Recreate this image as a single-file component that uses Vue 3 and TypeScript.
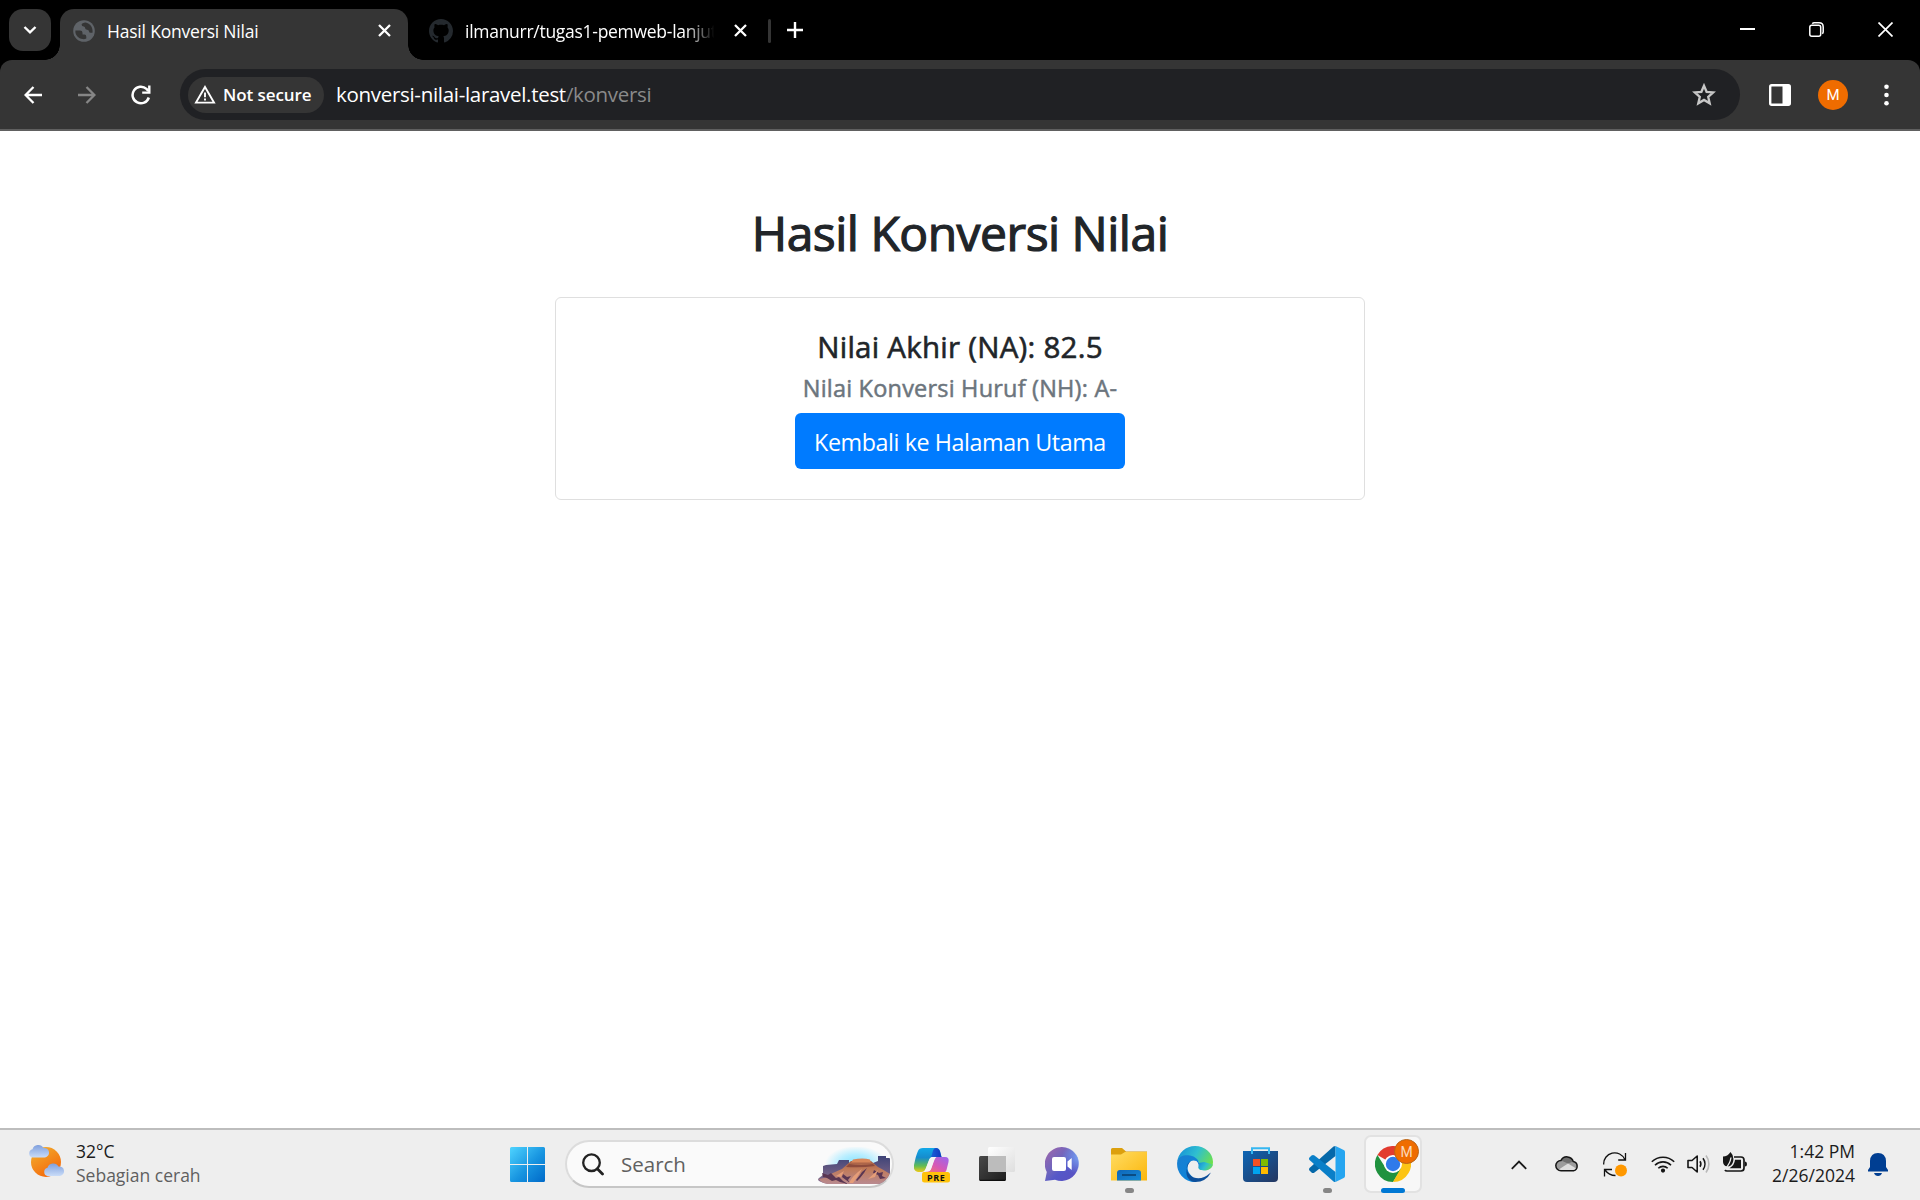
<script setup lang="ts">
import { ref } from 'vue'

const finalScore = ref<number>(82.5)
const letterGrade = ref<string>('A-')
const host = 'konversi-nilai-laravel.test'
const path = '/konversi'
</script>

<template>
  <div class="screen">
    <header class="tabstrip">
      <button class="tab-search" aria-label="Search tabs">
        <svg width="14" height="10" viewBox="0 0 14 10"><path d="M1.5 2 7 7.3 12.5 2" fill="none" stroke="#fff" stroke-width="2.4" /></svg>
      </button>
      <div class="tab active">
        <svg class="favicon globe" width="22" height="22" viewBox="0 0 22 22">
          <circle cx="11" cy="11" r="10.8" fill="#5f6368" />
          <path d="M2.400 10.500H7q2.500 0 2.500 2.200v1.800h2q1.800 0 1.800 2.200v1.800q-1.500.8-3.500.6C5.200 18.500 2 15 2.400 10.500Z" fill="#353535" />
          <path d="M12.500 2.400C10.500 2.600 8.800 3.200 8.600 4.600q0 1.800 2.200 2 1.300.3 1.300 1.500 0 1.700 2 1.700 1.800 0 1.900 1.700.1 1.300 1.500 1.300h2C20.300 7.500 17.200 3.300 12.500 2.400Z" fill="#353535" />
        </svg>
        <span class="tab-title t1">Hasil Konversi Nilai</span>
        <svg class="close" width="13" height="13" viewBox="0 0 13 13"><path d="M1 1l11 11M12 1 1 12" stroke="#fff" stroke-width="2.300" /></svg>
      </div>
      <div class="tab second">
        <svg class="favicon" width="24" height="24" viewBox="0 0 16 16"><path fill="#24292e" d="M8 0C3.580 0 0 3.580 0 8c0 3.540 2.290 6.530 5.470 7.590.4.070.55-.17.55-.38 0-.19-.01-.82-.01-1.490-2.010.37-2.530-.49-2.690-.94-.09-.23-.48-.94-.82-1.130-.28-.15-.68-.52-.01-.53.63-.01 1.080.58 1.230.82.720 1.210 1.870.87 2.330.66.070-.52.280-.87.510-1.070-1.780-.2-3.640-.89-3.640-3.950 0-.87.310-1.590.82-2.150-.08-.2-.36-1.020.08-2.120 0 0 .67-.21 2.200.82.640-.18 1.320-.27 2-.27s1.360.09 2 .27c1.530-1.040 2.200-.82 2.200-.82.440 1.100.160 1.920.08 2.120.510.560.82 1.270.82 2.150 0 3.070-1.870 3.750-3.650 3.950.29.250.54.730.54 1.480 0 1.070-.01 1.930-.01 2.200 0 .210.150.460.550.380A8.010 8.010 0 0 0 16 8c0-4.420-3.580-8-8-8Z" /></svg>
        <span class="tab-title t2">ilmanurr/tugas1-pemweb-lanjut</span>
        <svg class="close" width="13" height="13" viewBox="0 0 13 13"><path d="M1 1l11 11M12 1 1 12" stroke="#fff" stroke-width="2.300" /></svg>
      </div>
      <span class="separator"></span>
      <svg class="plus" width="16" height="16" viewBox="0 0 16 16"><path d="M8 0v16M0 8h16" stroke="#fff" stroke-width="2.400" /></svg>
      <div class="window-controls">
        <svg width="15" height="15" viewBox="0 0 15 15"><path d="M0 7h15" stroke="#fff" stroke-width="2" /></svg>
        <svg width="15" height="15" viewBox="0 0 15 15" fill="none" stroke="#fff" stroke-width="1.500"><rect x=".8" y="3.300" width="10.900" height="10.900" rx="2" /><path d="M3.300 1.700Q4 .8 5.300.8H10Q14.200.8 14.200 5v4.800q0 1.200-.9 2" /></svg>
        <svg width="15" height="15" viewBox="0 0 15 15"><path d="M.5.5l14 14M14.500.5l-14 14" stroke="#fff" stroke-width="1.700" /></svg>
      </div>
    </header>

    <div class="toolbar-back">
      <nav class="toolbar">
        <svg class="back" width="18" height="18" viewBox="0 0 18 18" fill="none" stroke="#fff" stroke-width="2.300"><path d="M18 9H2M9.500 1 1.600 9l7.900 8" /></svg>
        <svg class="forward" width="18" height="18" viewBox="0 0 18 18" fill="none" stroke="#868686" stroke-width="2.300"><path d="M0 9h16M8.500 1l7.900 8-7.900 8" /></svg>
        <svg class="reload" width="20" height="20" viewBox="0 0 20 20"><path d="M17.800 12.500A8.300 8.300 0 1 1 15.500 3.900L17.300 6" fill="none" stroke="#fff" stroke-width="2.500" /><path d="M19.500.5v8.300h-8.300V6.400h5.900V.5Z" fill="#fff" /></svg>
        <div class="omnibox">
          <div class="chip">
            <svg width="22" height="19" viewBox="0 0 22 19"><path d="M11 2 20 17.600H2Z" fill="none" stroke="#fff" stroke-width="1.900" /><path d="M11 7.600v4.600M11 13.600v2" stroke="#fff" stroke-width="1.900" /></svg>
            <span>Not secure</span>
          </div>
          <p class="url"><span class="host">{{ host }}</span><span class="path">{{ path }}</span></p>
          <svg class="star" width="24" height="23" viewBox="0 0 24 23"><path d="M12 2.700l2.600 6.100 6.600.6-5 4.400 1.500 6.500L12 16.900l-5.700 3.400 1.500-6.500-5-4.400 6.600-.6Z" fill="none" stroke="#c7c7c7" stroke-width="2.300" /></svg>
        </div>
        <svg class="panel" width="22" height="22" viewBox="0 0 22 22"><rect x="1.200" y="1.200" width="19.600" height="19.600" rx="1.500" fill="none" stroke="#fff" stroke-width="2.400" /><path d="M13.500 1h7.500v20h-7.500Z" fill="#fff" /></svg>
        <span class="avatar">M</span>
        <svg class="dots" width="5" height="22" viewBox="0 0 5 22" fill="#fff"><circle cx="2.500" cy="2.700" r="2.300" /><circle cx="2.500" cy="11" r="2.300" /><circle cx="2.500" cy="19.300" r="2.300" /></svg>
      </nav>
    </div>

    <main class="page">
      <h1>Hasil Konversi Nilai</h1>
      <section class="card">
        <h5>Nilai Akhir (NA): {{ finalScore }}</h5>
        <h6>Nilai Konversi Huruf (NH): {{ letterGrade }}</h6>
        <a class="btn">Kembali ke Halaman Utama</a>
      </section>
    </main>

    <footer class="taskbar">
      <svg class="weather" width="37" height="35" viewBox="0 0 37 35">
        <defs>
          <linearGradient id="sun" x1="0" y1="0" x2=".6" y2="1"><stop offset="0" stop-color="#f2b430" /><stop offset="1" stop-color="#f4690c" /></linearGradient>
          <linearGradient id="cloud" x1="0" y1="0" x2="0" y2="1"><stop offset="0" stop-color="#7f9fdd" /><stop offset="1" stop-color="#c9dcf8" /></linearGradient>
        </defs>
        <circle cx="18" cy="18" r="15" fill="url(#sun)" />
        <path d="M4.500 13.500a4.200 4.200 0 0 1 0-8.200A6 6 0 0 1 15.500 4a4.800 4.800 0 0 1 1.500 9.500Z" fill="url(#cloud)" />
        <path d="M19.500 32a4.200 4.200 0 0 1 0-8.200A6 6 0 0 1 30.500 22.500a4.800 4.800 0 0 1 1.500 9.500Z" fill="url(#cloud)" />
      </svg>
      <div class="weather-text"><span class="temp">32°C</span><span class="sky">Sebagian cerah</span></div>

      <svg class="start" width="35" height="35" viewBox="0 0 35 35">
        <defs><linearGradient id="win" x1="0" y1="0" x2="35" y2="35" gradientUnits="userSpaceOnUse"><stop offset="0" stop-color="#4fd4ff" /><stop offset=".55" stop-color="#1794e0" /><stop offset="1" stop-color="#0069c8" /></linearGradient></defs>
        <path d="M1.500 0H17v17H0V1.500Q0 0 1.500 0ZM18 0h15.500Q35 0 35 1.500V17H18ZM0 18h17v17H1.500Q0 35 0 33.500ZM18 18h17v15.500q0 1.500-1.500 1.500H18Z" fill="url(#win)" />
      </svg>

      <div class="search">
        <svg class="mag" width="22" height="23" viewBox="0 0 22 23"><circle cx="9.500" cy="9.700" r="8.300" fill="none" stroke="#222" stroke-width="2.300" /><path d="M15.300 15.800 20.500 21" stroke="#222" stroke-width="2.800" stroke-linecap="round" /></svg>
        <span>Search</span>
        <svg class="art" width="73" height="38" viewBox="0 0 73 38">
          <defs>
            <radialGradient id="glow" cx=".5" cy=".5" r=".5"><stop offset="0" stop-color="#7fe2ff" /><stop offset=".55" stop-color="#b9eeff" /><stop offset="1" stop-color="#fafafa" /></radialGradient>
            <linearGradient id="mesa" x1="0" y1="0" x2="0" y2="1"><stop offset="0" stop-color="#a55c42" /><stop offset=".35" stop-color="#c07a58" /><stop offset="1" stop-color="#b98a90" /></linearGradient>
            <linearGradient id="far" x1="0" y1="0" x2="0" y2="1"><stop offset="0" stop-color="#3e4377" /><stop offset="1" stop-color="#8d6f8c" /></linearGradient>
          </defs>
          <ellipse cx="38" cy="17" rx="31" ry="18" fill="url(#glow)" />
          <path d="M5 19 8 18l11-1 2-4h10v3h24l5-2v-5h8v2h4v16q-2 10-11 10H10Q-3 34 1 31l4-3Z" fill="url(#far)" />
          <path d="M6 31q10-6 18-9l9-8h20l7 6q6 3 12 7-4 10-12 10H10q-7-1-9-5Z" fill="url(#mesa)" />
          <path d="M35 12.500q10-2 17 0l1 3H33Z" fill="#d9875a" />
          <path d="M31 17q12 2 24 0l2 2q-14 2-29 1Z" fill="#8e4b3c" />
          <path d="M4 26l6 2 3-2 5 5 3-1 4 4 5 3-8-2-4-2-4 1-5-3-4-1ZM25 27l4 3 4-1-3 4 2 3-4-3-4-3ZM38 33l4-5 2-3 5-4-3 5-4 5-3 3ZM56 23l5 3 4-1-1 4 4 2-6 1-2-4-5-2Z" fill="#5a3652" />
          <path d="M31 36q4-8 13-14l-4 7-5 7ZM50 32l10-9-3 7ZM18 29l8-5-3 6Z" fill="#e59d78" />
        </svg>
      </div>

      <svg class="copilot" width="36" height="35" viewBox="0 0 36 35">
        <defs>
          <linearGradient id="cpa" x1="0" y1="0" x2="0" y2="1"><stop offset="0" stop-color="#12a8e8" /><stop offset=".4" stop-color="#168ccd" /><stop offset=".75" stop-color="#63bd52" /><stop offset="1" stop-color="#f0ca18" /></linearGradient>
          <linearGradient id="cpb" x1="1" y1="0" x2="0" y2="1"><stop offset="0" stop-color="#9867f0" /><stop offset=".5" stop-color="#d658b6" /><stop offset="1" stop-color="#ff7b59" /></linearGradient>
          <linearGradient id="cpc" x1="0" y1="0" x2="1" y2="0"><stop offset="0" stop-color="#1a5fd8" /><stop offset="1" stop-color="#1338be" /></linearGradient>
        </defs>
        <path d="M21 9h10q4.500 0 3.500 5l-2 8q-1 3-4 3H8l5-1.500q3 0 4-3Z" fill="url(#cpb)" />
        <path d="M9 0h13q3 0 4 3l1.500 6H19q-3 0-4 3l-3.500 9q-1 3-4 3H4q-5-1-4-7Q2 7 4 3 5 0 9 0Z" fill="url(#cpa)" />
        <path d="M22 0q3 0 4 3.500L27.500 9H17q1-2 1.600-5Q19.500 0 22 0Z" fill="url(#cpc)" />
        <path d="M18.500 9h4q-1.500 1-2.500 4l-2.500 7q-1 3.500-4 3.500H9q2-.5 3-3l3-8q1-3.500 3.500-3.500Z" fill="#f4f4f4" />
        <rect x="8" y="24" width="28" height="10.500" rx="2.500" fill="#ffc20a" />
        <text x="22.300" y="32.600" text-anchor="middle" class="pre">PRE</text>
      </svg>

      <svg class="taskview" width="36" height="35" viewBox="0 0 36 35">
        <defs>
          <linearGradient id="tva" x1="0" y1="0" x2="1" y2="1"><stop offset="0" stop-color="#494949" /><stop offset="1" stop-color="#1d1d1d" /></linearGradient>
          <linearGradient id="tvb" x1="0" y1="0" x2="1" y2="1"><stop offset="0" stop-color="#fff" /><stop offset="1" stop-color="#dedede" /></linearGradient>
        </defs>
        <rect x="0" y="9" width="27" height="25" rx="1.500" fill="url(#tva)" />
        <rect x="9" y="0" width="27" height="25" rx="1.500" fill="url(#tvb)" />
        <path d="M9 9h18v16H10.500Q9 25 9 23.500Z" fill="#bcbcbc" />
        <path d="M1 33.300h25" stroke="#080808" />
      </svg>

      <svg class="chat" width="34" height="34" viewBox="0 0 34 34">
        <defs>
          <linearGradient id="chat" x1="0" y1="0" x2="1" y2="1"><stop offset="0" stop-color="#a467a9" /><stop offset=".45" stop-color="#6a64bf" /><stop offset=".6" stop-color="#5558c8" /><stop offset="1" stop-color="#5b4fc0" /></linearGradient>
          <radialGradient id="shine" cx="1" cy=".3" r=".5"><stop offset="0" stop-color="#7aa0f0" /><stop offset="1" stop-color="#7aa0f0" stop-opacity="0" /></radialGradient>
        </defs>
        <path d="M17 0A17 17 0 1 1 10 32.700L0 34l1.800-9A17 17 0 0 1 17 0Z" fill="url(#chat)" />
        <circle cx="17" cy="17" r="17" fill="url(#shine)" />
        <rect x="7" y="10" width="14" height="14" rx="2" fill="#fff" /><path d="M22.500 14.500 26.700 11v12l-4.200-3.500Z" fill="#fff" />
      </svg>

      <div class="app folder">
        <svg width="36" height="33" viewBox="0 0 36 33">
          <defs><linearGradient id="fold" x1="0" y1="0" x2="1" y2="1"><stop offset="0" stop-color="#ffdc62" /><stop offset="1" stop-color="#fbb60b" /></linearGradient><linearGradient id="tray" x1="0" y1="0" x2="1" y2="1"><stop offset="0" stop-color="#0f66b8" /><stop offset="1" stop-color="#168bd8" /></linearGradient></defs>
          <path d="M0 1.500Q0 0 1.500 0H11l4 3.500h21V10H0Z" fill="#dca00e" />
          <path d="M0 6.500h10L14 4h22v28.500H0Z" fill="url(#fold)" />
          <path d="M6 32.500V25q0-3 3-3h18q3 0 3 3v7.500Z" fill="url(#tray)" /><path d="M11 27h14" stroke="#0b4477" stroke-width="1.700" />
        </svg>
        <i class="running"></i>
      </div>

      <svg class="edge" width="36" height="36" viewBox="0 0 36 36">
        <defs>
          <linearGradient id="ega" x1="0" y1=".2" x2="1" y2=".6"><stop offset="0" stop-color="#1690d8" /><stop offset=".5" stop-color="#2fbfd0" /><stop offset="1" stop-color="#6de04c" /></linearGradient>
          <linearGradient id="egb" x1="0" y1="0" x2=".7" y2="1"><stop offset="0" stop-color="#1b7fd0" /><stop offset="1" stop-color="#0a85dc" /></linearGradient>
        </defs>
        <path d="M.2 16A18 18 0 0 1 18 0c10 0 18 7 18 16 0 6-5 8.500-9 8.500-5 0-6.500-2-5.500-3.500 1.500-3 .5-7-4-8.500C10 10 1 11 .2 16Z" fill="url(#ega)" />
        <path d="M.2 16C1 10 8 8.500 13 9.500c5 1 9 4 9 8q0 2-.5 3c0-3-1.500-6-5-6-5 0-8 7-4 13 3 4.500 10 8 5.500 8.500A18 18 0 0 1 .2 16Z" fill="url(#egb)" />
        <path d="M14.500 14.800C9 17 8 24 13 29c5 5 14 4 19.500-1.500l1.500-1A18 18 0 0 1 18 36C11 35 8 29 10 22q1-5 4.500-7.200Z" fill="#0d4f9a" />
        <path d="M14.500 16.500c-1.500 3-1 7 3.500 9.500 4.500 2.300 10 2 14 0 1-.4 2.500 0 1.700 1L36 23 23 24q-2-1.400-1.500-3 .6-5-3.500-6.200Z" fill="#eee" />
        <path d="M21.500 20.500q-1 3.500 5.500 4c4 0 8-2 9-6L27 16l-5 1Z" fill="url(#ega)" />
      </svg>

      <svg class="store" width="35" height="35" viewBox="0 0 35 35">
        <defs><linearGradient id="store" x1="0" y1="0" x2="1" y2="1"><stop offset="0" stop-color="#0c65b5" /><stop offset="1" stop-color="#25365f" /></linearGradient></defs>
        <path d="M0 4h35v27q0 4-4 4H4q-4 0-4-4Z" fill="url(#store)" />
        <path d="M9 7V1.200h17V7" fill="none" stroke="#36b7f1" stroke-width="2" />
        <path d="M10 12h7v7h-7Z" fill="#f25022" /><path d="M18 12h7v7h-7Z" fill="#7fba00" /><path d="M10 20h7v7h-7Z" fill="#00a4ef" /><path d="M18 20h7v7h-7Z" fill="#ffb900" />
      </svg>

      <div class="app vscode">
        <svg width="36" height="36" viewBox="0 0 36 36">
          <path d="M26.500 0v10L5.500 26.500q-1.500 1-3 0l-2-2q-1-1.200 0-2.500L24.500.5Q25.500 0 26.500 0Z" fill="#0568a9" />
          <path d="M26.500 36V26L5.500 9.500q-1.500-1-3 0l-2 2q-1 1.200 0 2.500L24.500 35.500q1 .5 2 .5Z" fill="#0a7fc8" />
          <path d="M26.500 0 34.700 4Q36 4.700 36 6v24q0 1.300-1.300 2L26.500 36Z" fill="#25a5f0" />
        </svg>
        <i class="running"></i>
      </div>

      <div class="app chrome">
        <svg width="36" height="36" viewBox="0 0 36 36">
          <path d="M18 18 2.400 9A18 18 0 0 1 33.600 9Z" fill="#e23b30" /><path d="M2.400 9A18 18 0 0 0 18 36l8.500-13.500H18L10 21Z" fill="#20923f" /><path d="M33.600 9A18 18 0 0 1 18 36l8-14 0-13Z" fill="#fcc414" />
          <circle cx="18" cy="18" r="9" fill="#fff" /><circle cx="18" cy="18" r="7.200" fill="#2f7aea" />
        </svg>
        <span class="badge">M</span>
        <i class="running"></i>
      </div>

      <svg class="chevron" width="16" height="10" viewBox="0 0 16 10"><path d="M.8 8.800 8 1.600l7.200 7.200" fill="none" stroke="#1a1a1a" stroke-width="1.800" /></svg>
      <svg class="onedrive" width="24" height="17" viewBox="0 0 24 17">
        <path d="M6 15.800A5.200 5.200 0 0 1 6 5.400a6.700 6.700 0 0 1 12.300 1.200A4.700 4.700 0 0 1 18.500 15.800Z" fill="#9c9c9c" />
        <path d="M6 5.400a6.700 6.700 0 0 1 12.300 1.200L13 8.500Z" fill="#6f6f6f" /><path d="M3 15l10-6.500 9 5.500-3 1.800H6Z" fill="#dedede" />
        <path d="M6 15.800A5.200 5.200 0 0 1 6 5.400a6.700 6.700 0 0 1 12.300 1.200A4.700 4.700 0 0 1 18.500 15.800Z" fill="none" stroke="#151515" stroke-width="1.500" />
      </svg>
      <svg class="sync" width="24" height="25" viewBox="0 0 24 25"><path d="M.7 12.500A11 11 0 0 1 21.800 7.500M22.500 1v7h-7.300M1.500 24.500v-7h7.500M2 18q4 5.500 10.500 5.500" fill="none" stroke="#111" stroke-width="1.300" /><circle cx="18" cy="18.500" r="6" fill="#ff9800" /></svg>
      <svg class="wifi" width="24" height="18" viewBox="0 0 24 18" fill="none" stroke="#161616" stroke-width="1.600"><path d="M.8 6.800a16 16 0 0 1 22.400 0M4 10.200a11.300 11.300 0 0 1 16 0M7.300 13.300a6.700 6.700 0 0 1 9.400 0" /><circle cx="12" cy="15.600" r="1.300" fill="#161616" /></svg>
      <svg class="speaker" width="24" height="20" viewBox="0 0 24 20" fill="none" stroke="#161616" stroke-width="1.600"><path d="M1 6.500h4L10.200 2v16L5 13.500H1Z" stroke-linejoin="round" /><path d="M13 7.300a5 5 0 0 1 0 5.400M16 4.300a9.500 9.500 0 0 1 0 11.400" /><path d="M19 1.500a14 14 0 0 1 0 17" stroke="#b9b9b9" /></svg>
      <svg class="battery" width="24" height="20" viewBox="0 0 24 20">
        <path d="M11 5h7q3 0 3 3v8q0 3-3 3H4q-1.500 0-2-1" fill="none" stroke="#161616" stroke-width="1.700" /><path d="M22 9.500q2 0 2 2.500t-2 2.500Z" fill="#161616" />
        <path d="M12 7.700h6v8.500H6.500q5-3 5.500-8.500Z" fill="#161616" />
        <path d="M7.500 0q4 4 2.500 10-1.500 4.500-6 4.500-4.500-1-4-6.500V4.500Q4.500 4.500 7.500 0Z" fill="#161616" /><path d="M8 5.500Q7 12 2 17" fill="none" stroke="#eee" stroke-width="1.300" />
      </svg>
      <div class="clock"><span class="time">1:42 PM</span><span class="date">2/26/2024</span></div>
      <svg class="bell" width="20" height="23" viewBox="0 0 20 23"><path d="M10 0q7.500 0 8 8v6l2 3v1.500H0V17l2-3V8q.5-8 8-8Z" fill="#003e92" /><path d="M6 20h8q-1 3-4 3t-4-3Z" fill="#003e92" /></svg>
    </footer>
  </div>
</template>

<style>
body {
  overflow: hidden;
}
</style>

<style scoped>
.screen {
  width: 1920px;
  height: 1200px;
  display: flex;
  flex-direction: column;
  background: #fff;
  font-family: "Open Sans", "Noto Sans", sans-serif;
  white-space: nowrap;
}
svg {
  display: block;
  flex: none;
}
.tabstrip {
  height: 60px;
  flex: none;
  display: flex;
  background: #000;
}
.tab-search {
  width: 42px;
  height: 42px;
  margin: 9px 9px 0;
  padding: 0;
  border: 0;
  border-radius: 14px;
  background: #353535;
  display: flex;
  align-items: center;
  justify-content: center;
}
.tab {
  display: flex;
  align-items: center;
  box-sizing: border-box;
  height: 51px;
  margin-top: 9px;
  padding-bottom: 8px;
}
.tab.active {
  position: relative;
  width: 348px;
  padding-left: 13px;
  border-radius: 14px 14px 0 0;
  background: #353535;
}
.tab.active::before,
.tab.active::after {
  content: "";
  position: absolute;
  bottom: 0;
  width: 15px;
  height: 15px;
}
.tab.active::before {
  left: -15px;
  background: radial-gradient(circle at 0 0, transparent 14.500px, #353535 15px);
}
.tab.active::after {
  right: -15px;
  background: radial-gradient(circle at 100% 0, transparent 14.500px, #353535 15px);
}
.tab.second {
  width: 360px;
  padding-left: 21px;
}
.tab-title {
  color: #fff;
  font-size: 17.500px;
  line-height: 24px;
  margin-top: 1px;
  overflow: hidden;
}
.t1 {
  width: 257px;
  margin-left: 12px;
  margin-right: 14px;
  letter-spacing: -0.200px;
}
.t2 {
  width: 252px;
  margin-left: 12px;
  margin-right: 17px;
  letter-spacing: -0.280px;
  mask-image: linear-gradient(to right, #000 87%, transparent 99%);
}
.separator {
  width: 3px;
  height: 24px;
  margin: 19px 16px 0 0;
  border-radius: 2px;
  background: #353535;
}
.plus {
  margin-top: 22px;
}
.window-controls {
  display: flex;
  gap: 54px;
  margin: 22px 27px 0 auto;
}
.toolbar-back {
  flex: none;
  background: #000;
}
.toolbar {
  height: 69px;
  border-bottom: 2px solid #606060;
  border-radius: 12px 12px 0 0;
  background: #353535;
  display: flex;
  align-items: center;
}
.back {
  margin-left: 24px;
}
.forward {
  margin-left: 36px;
}
.reload {
  margin: 0 29px 0 35px;
}
.omnibox {
  width: 1560px;
  height: 51px;
  border-radius: 26px;
  background: #202124;
  display: flex;
  align-items: center;
}
.chip {
  width: 136px;
  height: 36px;
  margin-left: 8px;
  border-radius: 18px;
  background: #353535;
  color: #fff;
  display: flex;
  align-items: center;
}
.chip svg {
  margin: 0 7px 0 6px;
}
.chip span {
  font-size: 17px;
  font-weight: 600;
  line-height: 24px;
  letter-spacing: -0.070px;
}
.url {
  margin: -2px 0 0 12px;
  font-size: 20.500px;
  line-height: 30px;
  letter-spacing: -0.300px;
}
.host {
  color: #fff;
}
.path {
  color: #8a8a8a;
}
.star {
  margin: 0 24px 0 auto;
}
.panel {
  margin-left: 29px;
}
.avatar {
  width: 30px;
  height: 30px;
  margin-left: 27px;
  border-radius: 50%;
  background: #ef6c00;
  color: #fff;
  font: 15px/31px Roboto, sans-serif;
  text-align: center;
}
.dots {
  margin-left: 36px;
}
.page {
  flex: 1;
  display: flex;
  flex-direction: column;
  align-items: center;
}
h1,
h5,
h6 {
  margin: 0;
  font-weight: 500;
  color: #212529;
}
h1 {
  margin: 73px 0 35px;
  font-size: 48px;
  line-height: 58px;
  letter-spacing: -0.500px;
  -webkit-text-stroke: 1.200px #212529;
}
.card {
  box-sizing: border-box;
  width: 810px;
  height: 203px;
  padding-top: 31px;
  border: 1px solid #dfdfdf;
  border-radius: 6px;
  display: flex;
  flex-direction: column;
  align-items: center;
}
h5 {
  font-size: 29.500px;
  line-height: 36px;
  letter-spacing: 0.250px;
  -webkit-text-stroke: 0.600px #212529;
}
h6 {
  margin: 8px 0 10px;
  font-size: 23.500px;
  line-height: 30px;
  letter-spacing: 0.200px;
  color: #6c757d;
  -webkit-text-stroke: 0.500px #6c757d;
}
.btn {
  box-sizing: border-box;
  width: 330px;
  height: 56px;
  padding-top: 2px;
  border-radius: 6px;
  background: #007bff;
  color: #fff;
  font-size: 23.300px;
  line-height: 55px;
  letter-spacing: -0.420px;
  text-align: center;
}
.taskbar {
  box-sizing: border-box;
  height: 72px;
  flex: none;
  border-top: 2px solid #bdbdbd;
  background: #eee;
  display: flex;
  align-items: center;
}
.weather {
  margin: -8px 0 0 28px;
}
.weather-text,
.clock {
  display: flex;
  flex-direction: column;
  font-size: 17.500px;
  line-height: 24px;
  color: #1b1b1b;
}
.weather-text {
  width: 130px;
  margin: -4px 304px 0 11px;
}
.sky {
  color: #5f5f5f;
}
.start {
  margin-top: -1px;
}
.search {
  box-sizing: border-box;
  width: 329px;
  height: 48px;
  margin: -2px 20px 0 20px;
  padding-left: 15px;
  border: 2px solid #dcdcdc;
  border-bottom-color: #c6c6c6;
  border-radius: 24px;
  background: #fafafa;
  display: flex;
  align-items: center;
}
.search span {
  margin: -1px 0 0 17px;
  font-size: 20.500px;
  line-height: 30px;
  color: #606060;
}
.art {
  margin: 3px 1px 0 auto;
  border-radius: 0 18px 18px 0;
}
.pre {
  font: 700 9px "Open Sans", sans-serif;
  letter-spacing: 0.600px;
  fill: #111;
}
.copilot {
  margin: 0 29px 0 0;
}
.taskview {
  margin: -2px 30px 0 0;
}
.chat {
  margin: -2px 23px 0 0;
}
.app {
  position: relative;
  box-sizing: border-box;
  width: 54px;
  height: 58px;
  display: flex;
  align-items: center;
  justify-content: center;
  margin-top: -2px;
}
.app svg {
  margin-top: 0;
}
.folder {
  margin-right: 21px;
}
.running {
  position: absolute;
  bottom: 0;
  left: calc(50% - 4.500px);
  width: 9px;
  height: 5px;
  border-radius: 3px;
  background: #868686;
}
.edge {
  margin: -2px 30px 0 0;
}
.store {
  margin: -1px 22px 0 0;
}
.chrome {
  width: 58px;
  margin-left: 10px;
  border: 2px solid #e2e2e2;
  border-radius: 7px;
  background: #f7f7f7;
}
.chrome .running {
  bottom: -2px;
  left: 15px;
  width: 24px;
  background: #0078d4;
}
.badge {
  position: absolute;
  right: 1px;
  top: 2px;
  box-sizing: border-box;
  width: 25px;
  height: 25px;
  border: 1px solid #b86518;
  border-radius: 50%;
  background: #ef6c00;
  color: #fbd9bd;
  font: 14px/24px Roboto, sans-serif;
  text-align: center;
}
.chevron {
  margin: -1px 28px 0 89px;
}
.onedrive {
  margin: -3px 24px 0 0;
}
.sync {
  margin: -2px 24px 0 0;
}
.wifi {
  margin: -3px 12px 0 0;
}
.speaker {
  margin: -3px 12px 0 0;
}
.battery {
  margin: -7px 0 0 0;
}
.clock {
  width: 108px;
  margin: -4px 13px 0 0;
  align-items: flex-end;
}
.bell {
  margin-top: -1px;
}
</style>
